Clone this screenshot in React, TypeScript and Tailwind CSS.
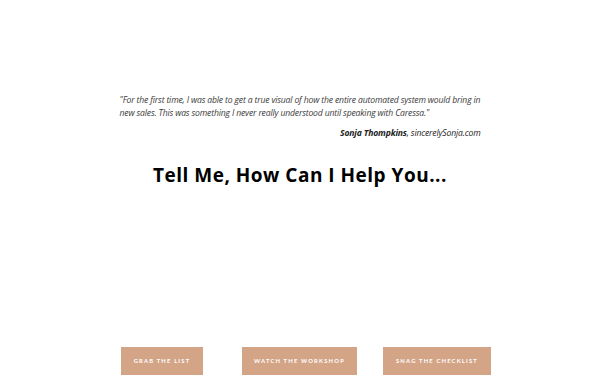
import React from "react";

export default function App() {
  const btn = "h-[40px] bg-[#d4a487] flex justify-center pt-[10px] font-['Lato',sans-serif] font-bold text-[5.8px] tracking-[1.2px] text-white";
  return (
    <div className="w-[600px] h-[375px] overflow-hidden bg-white flex flex-col items-center">
      <div className="w-[364px] ml-[3px] mt-[94px] font-['Open_Sans',sans-serif] italic text-[8.6px] leading-[13px] tracking-[-0.15px] text-[#3a3a3a]">
        <p>"For the first time, I was able to get a true visual of how the entire automated system would bring in new sales. This was something I never really understood until speaking with Caressa."</p>
        <p className="text-right mt-[7px] pr-[3px] text-[#222]"><span className="font-bold">Sonja Thompkins</span>, sincerelySonja.com</p>
      </div>
      <h2 className="mt-[21px] font-['Open_Sans',sans-serif] font-bold text-[19px] leading-[28px] tracking-[0.5px] text-black">Tell Me, How Can I Help You...</h2>
      <div className="mt-[158px] self-start ml-[121px] flex">
        <div className={btn + " w-[82px]"}>GRAB THE LIST</div>
        <div className={btn + " w-[115px] ml-[39px]"}>WATCH THE WORKSHOP</div>
        <div className={btn + " w-[108px] ml-[26px]"}>SNAG THE CHECKLIST</div>
      </div>
    </div>
  );
}
